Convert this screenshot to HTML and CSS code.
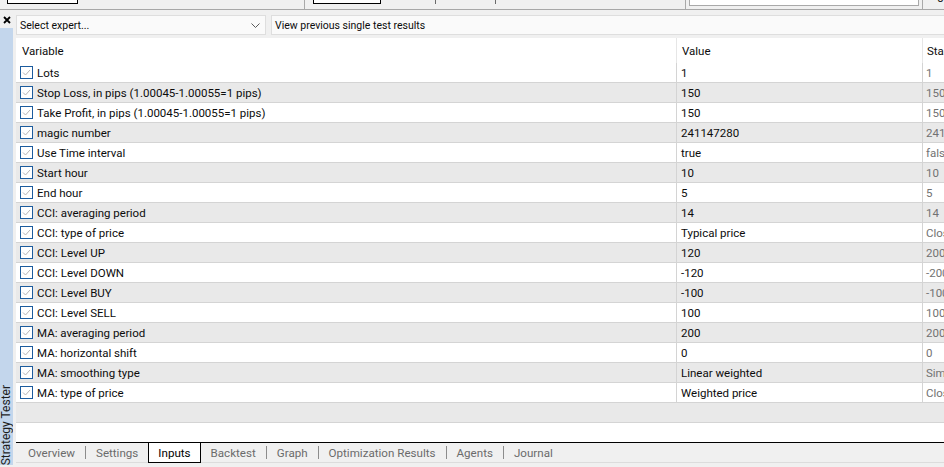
FILE: index.html
```html
<!DOCTYPE html>
<html>
<head>
<meta charset="utf-8">
<title>Strategy Tester</title>
<link rel="stylesheet" href="styles.css">
</head>
<body>
<div class="topbar">
  <div class="tb-box tb-box1"></div>
  <div class="tb-vline tb-l1"></div>
  <div class="tb-box tb-box2"></div>
  <div class="tb-tick tb-t1"></div>
  <div class="tb-tick tb-t2"></div>
  <div class="tb-vline tb-l2"></div>
  <div class="tb-field"></div>
  <div class="tb-vline tb-l3"></div>
  <span class="tb-zero">0</span>
</div>
<div class="main">
  <aside class="side">
    <div class="close">
      <svg width="8" height="8" viewBox="0 0 8 8"><path d="M1 1 L7 7 M7 1 L1 7" stroke="#000" stroke-width="1.8"/></svg>
    </div>
    <div class="side-bar"><span class="side-title">Strategy Tester</span></div>
  </aside>
  <section class="content">
    <div class="toolbar">
      <div class="combo">
        <span>Select expert...</span>
        <svg class="chev" width="9" height="5" viewBox="0 0 9 5"><path d="M0.5 0.5 L4.5 4.5 L8.5 0.5" fill="none" stroke="#5a5a5a" stroke-width="1"/></svg>
      </div>
      <div class="viewbox">View previous single test results</div>
    </div>
    <div class="list">
      <div class="row head"><div class="c1">Variable</div><div class="c2">Value</div><div class="c3">Start</div></div>
      <div class="row"><div class="c1"><i class="cb"></i>Lots</div><div class="c2">1</div><div class="c3">1</div></div>
      <div class="row alt"><div class="c1"><i class="cb"></i>Stop Loss, in pips (1.00045-1.00055=1 pips)</div><div class="c2">150</div><div class="c3">150</div></div>
      <div class="row"><div class="c1"><i class="cb"></i>Take Profit, in pips (1.00045-1.00055=1 pips)</div><div class="c2">150</div><div class="c3">150</div></div>
      <div class="row alt"><div class="c1"><i class="cb"></i>magic number</div><div class="c2">241147280</div><div class="c3">241147280</div></div>
      <div class="row"><div class="c1"><i class="cb"></i>Use Time interval</div><div class="c2">true</div><div class="c3">false</div></div>
      <div class="row alt"><div class="c1"><i class="cb"></i>Start hour</div><div class="c2">10</div><div class="c3">10</div></div>
      <div class="row"><div class="c1"><i class="cb"></i>End hour</div><div class="c2">5</div><div class="c3">5</div></div>
      <div class="row alt"><div class="c1"><i class="cb"></i>CCI: averaging period</div><div class="c2">14</div><div class="c3">14</div></div>
      <div class="row"><div class="c1"><i class="cb"></i>CCI: type of price</div><div class="c2">Typical price</div><div class="c3">Close price</div></div>
      <div class="row alt"><div class="c1"><i class="cb"></i>CCI: Level UP</div><div class="c2">120</div><div class="c3">200</div></div>
      <div class="row"><div class="c1"><i class="cb"></i>CCI: Level DOWN</div><div class="c2">-120</div><div class="c3">-200</div></div>
      <div class="row alt"><div class="c1"><i class="cb"></i>CCI: Level BUY</div><div class="c2">-100</div><div class="c3">-100</div></div>
      <div class="row"><div class="c1"><i class="cb"></i>CCI: Level SELL</div><div class="c2">100</div><div class="c3">100</div></div>
      <div class="row alt"><div class="c1"><i class="cb"></i>MA: averaging period</div><div class="c2">200</div><div class="c3">200</div></div>
      <div class="row"><div class="c1"><i class="cb"></i>MA: horizontal shift</div><div class="c2">0</div><div class="c3">0</div></div>
      <div class="row alt"><div class="c1"><i class="cb"></i>MA: smoothing type</div><div class="c2">Linear weighted</div><div class="c3">Simple</div></div>
      <div class="row"><div class="c1"><i class="cb"></i>MA: type of price</div><div class="c2">Weighted price</div><div class="c3">Close price</div></div>
      <div class="row alt empty"></div>
      <div class="filler"></div>
    </div>
    <nav class="tabs">
      <span class="tab">Overview</span><span class="sep"></span>
      <span class="tab">Settings</span>
      <span class="tab active">Inputs</span>
      <span class="tab">Backtest</span><span class="sep"></span>
      <span class="tab">Graph</span><span class="sep"></span>
      <span class="tab">Optimization Results</span><span class="sep"></span>
      <span class="tab">Agents</span><span class="sep"></span>
      <span class="tab">Journal</span>
    </nav>
    <div class="bottom"></div>
  </section>
</div>
</body>
</html>
```

FILE: styles.css
```css
* { box-sizing: border-box; }
html, body {
  margin: 0;
  padding: 0;
  width: 944px;
  height: 467px;
  overflow: hidden;
  background: #f0f0f0;
  font-family: "Roboto", "Liberation Sans", sans-serif;
  font-size: 11.5px;
  color: #0c0c0c;
}

/* top fragment of the panel above */
.topbar {
  height: 10px;
  border-bottom: 1px solid #a7a7a7;
  display: flex;
  align-items: flex-start;
  overflow: hidden;
}
.tb-box {
  height: 4px;
  background: #fff;
  border: 1px solid #000;
  border-top: none;
}
.tb-box1 { margin-left: 7px; width: 71px; }
.tb-box2 { margin-left: 8px; width: 68px; }
.tb-vline { width: 1px; height: 9px; background: #a9a9a9; }
.tb-l1 { margin-left: 226px; }
.tb-l2 { margin-left: 189px; }
.tb-l3 { margin-left: 3px; }
.tb-tick { width: 1px; height: 4px; background: #6a6a6a; }
.tb-t1 { margin-left: 54px; }
.tb-t2 { margin-left: 59px; }
.tb-field {
  margin-left: 3px;
  width: 230px;
  height: 6px;
  background: #fff;
  border: 1px solid #a9a9a9;
  border-top: none;
}
.tb-zero {
  margin-left: 14px;
  margin-top: -9px;
  font-size: 12px;
  line-height: 14px;
  color: #222;
}

.main {
  height: 457px;
  display: flex;
}

/* left vertical caption strip */
.side {
  width: 16px;
  display: flex;
  flex-direction: column;
}
.close {
  height: 18px;
  width: 14px;
  display: flex;
  align-items: center;
  justify-content: center;
  padding-top: 2px;
}
.side-bar {
  flex: 1;
  width: 13px;
  background: #c3d6ec;
  margin-bottom: 2px;
  display: flex;
  flex-direction: column;
  justify-content: flex-end;
  align-items: center;
  padding-bottom: 0;
}
.side-title {
  writing-mode: vertical-rl;
  transform: rotate(180deg);
  font-size: 12px;
  line-height: 13px;
  color: #1e1e1e;
  white-space: nowrap;
}

.content {
  flex: 1;
  display: flex;
  flex-direction: column;
  min-width: 0;
}

.toolbar {
  height: 28px;
  display: flex;
  padding-top: 5px;
  gap: 5px;
  font-size: 10.5px;
}
.combo, .viewbox {
  height: 20px;
  background: #fafafa;
  border: 1px solid #dedede;
  display: flex;
  align-items: center;
  padding-left: 3px;
  white-space: nowrap;
}
.combo {
  width: 250px;
  justify-content: space-between;
  padding-right: 5px;
}
.viewbox {
  flex: 1;
  border-right: none;
}

.list {
  height: 404px;
  background: #fff;
  overflow: hidden;
}
.row {
  display: grid;
  grid-template-columns: 661px 246px 1fr;
  height: 20px;
  border-bottom: 1px solid #d4d4d4;
  white-space: nowrap;
}
.row.alt { background: #e9e9e9; }
.row > div {
  display: flex;
  align-items: center;
  overflow: hidden;
}
.c1 { padding-left: 4px; border-right: 1px solid #d4d4d4; }
.c2 { padding-left: 4px; border-right: 1px solid #d4d4d4; }
.c3 { padding-left: 3px; color: #727272; }
.row.head {
  height: 25px;
  border-bottom: none;
}
.row.head .c1 { padding-left: 6px; border-right-color: #e6e6e6; }
.row.head .c2 { padding-left: 5px; border-right-color: #e6e6e6; }
.row.head .c3 { padding-left: 4px; color: #0c0c0c; }
.row.empty { display: block; }

.cb {
  width: 13px;
  height: 13px;
  margin-right: 4px;
  flex: none;
  border: 1px solid #1c5c9e;
  background: #fff url("data:image/svg+xml,%3Csvg xmlns='http://www.w3.org/2000/svg' width='11' height='11' viewBox='0 0 11 11'%3E%3Cpath d='M2 5.5 L4.5 8 L9 3' fill='none' stroke='%23b5b5b5' stroke-width='1'/%3E%3C/svg%3E") no-repeat center;
}
.filler { height: 19px; }

.tabs {
  height: 21px;
  border-top: 1px solid #000;
  border-bottom: 1px solid #dcdcdc;
  display: flex;
  align-items: stretch;
  padding-left: 2px;
  font-size: 11.6px;
}
.tab {
  padding: 0 10px;
  display: flex;
  align-items: center;
  color: #6b6b6b;
  white-space: nowrap;
}
.tab.active {
  background: #fff;
  color: #000;
  border: 1px solid #000;
  border-top: none;
  margin-bottom: -1px;
  padding: 0 9px;
}
.sep {
  width: 1px;
  height: 13px;
  align-self: center;
  background: #8c8c8c;
}
.bottom { flex: 1; }
```
